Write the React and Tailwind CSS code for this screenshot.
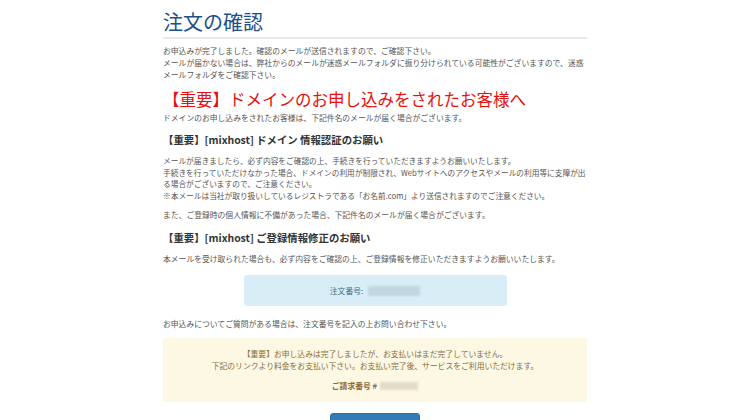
import React from "react";

const FONT = { fontFamily: '"Noto Sans CJK JP", "Noto Sans", sans-serif' };

export default function App() {
  return (
    <div className="w-[750px] h-[420px] overflow-hidden bg-white flex justify-center" style={FONT}>
      <div className="w-[424px] pt-[9px]">
        {/* Title */}
        <h1 className="text-[20px] leading-[26px] text-[#1c4f8c] font-normal">注文の確認</h1>
        <div className="h-[2px] bg-[#e8e8e8] mt-[2px]"></div>

        <div className="mt-[6px] text-[7.8px] leading-[12px] text-[#555]">
          <p>お申込みが完了しました。確認のメールが送信されますので、ご確認下さい。</p>
          <p>メールが届かない場合は、弊社からのメールが迷惑メールフォルダに振り分けられている可能性がございますので、迷惑メールフォルダをご確認下さい。</p>
        </div>

        <h2 className="mt-[7px] text-[16.5px] leading-[22px] text-[#e8100e] font-normal">【重要】ドメインのお申し込みをされたお客様へ</h2>

        <p className="mt-[2px] text-[7.8px] leading-[12px] text-[#555]">
          ドメインのお申し込みをされたお客様は、下記件名のメールが届く場合がございます。
        </p>

        <h3 className="mt-[9px] text-[10.4px] leading-[14px] font-bold text-[#333]">【重要】[mixhost] ドメイン 情報認証のお願い</h3>

        <div className="mt-[8px] text-[7.7px] leading-[11.5px] text-[#555]">
          <p>メールが届きましたら、必ず内容をご確認の上、手続きを行っていただきますようお願いいたします。</p>
          <p>手続きを行っていただけなかった場合、ドメインの利用が制限され、Webサイトへのアクセスやメールの利用等に支障が出る場合がございますので、ご注意ください。</p>
          <p>※本メールは当社が取り扱いしているレジストラである「お名前.com」より送信されますのでご注意ください。</p>
        </div>

        <p className="mt-[8px] text-[7.8px] leading-[12px] text-[#555]">
          また、ご登録時の個人情報に不備があった場合、下記件名のメールが届く場合がございます。
        </p>

        <h3 className="mt-[10px] text-[10.4px] leading-[14px] font-bold text-[#333]">【重要】[mixhost] ご登録情報修正のお願い</h3>

        <p className="mt-[8px] text-[7.8px] leading-[12px] text-[#555]">
          本メールを受け取られた場合も、必ず内容をご確認の上、ご登録情報を修正いただきますようお願いいたします。
        </p>

        {/* Order number */}
        <div className="mt-[10px] mx-auto w-[263px] h-[31px] rounded-[3px] bg-[#d9edf7] flex items-center justify-center gap-[5px] text-[7.8px] text-[#31708f]">
          <span>注文番号:</span>
          <span className="w-[52px] h-[10px] bg-[#c2d6e1] blur-[1px]"></span>
        </div>

        <p className="mt-[12px] text-[7.8px] leading-[12px] text-[#555]">
          お申込みについてご質問がある場合は、注文番号を記入の上お問い合わせ下さい。
        </p>

        {/* Payment notice */}
        <div className="mt-[8px] h-[64px] rounded-[3px] bg-[#fcf8e3] text-[#8a6d3b] text-[7.8px] leading-[12px] text-center pt-[10px]">
          <p>【重要】お申し込みは完了しましたが、お支払いはまだ完了していません。</p>
          <p>下記のリンクより料金をお支払い下さい。お支払い完了後、サービスをご利用いただけます。</p>
          <div className="mt-[8px] flex items-center justify-center gap-[3px] font-bold">
            <span>ご請求番号 #</span>
            <span className="w-[38px] h-[8px] bg-[#e3dccb] blur-[1px]"></span>
          </div>
        </div>

        <div className="mt-[11px] flex justify-center">
          <button className="w-[90px] h-[30px] rounded-[3px] bg-[#337ab7] border border-[#2e6da4]"></button>
        </div>
      </div>
    </div>
  );
}
